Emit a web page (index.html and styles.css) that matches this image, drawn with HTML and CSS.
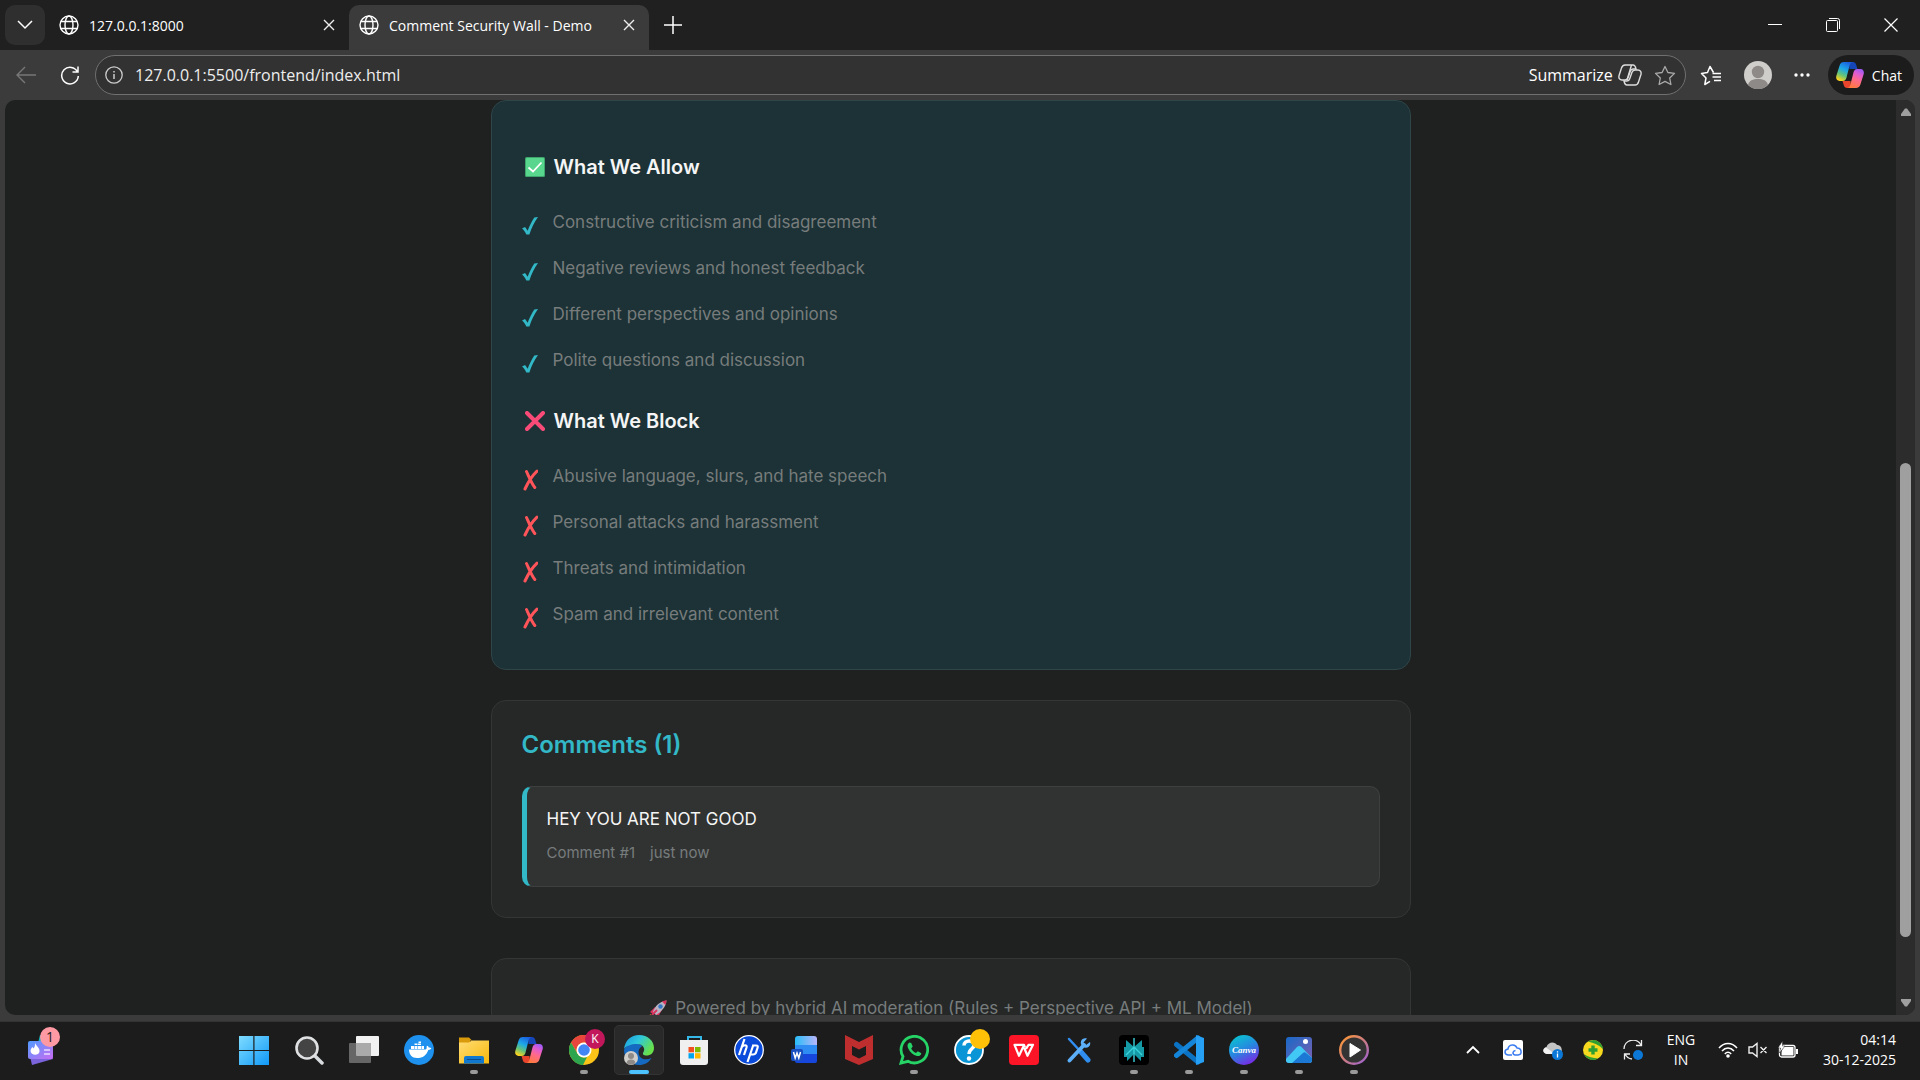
FILE: index.html
```html
<!DOCTYPE html>
<html lang="en">

<head>
    <meta charset="UTF-8">
    <meta name="viewport" content="width=device-width, initial-scale=1.0">
    <title>Comment Security Wall - Demo</title>
    <link rel="stylesheet" href="styles.css">
</head>

<body>
    <!-- Shared icons -->
    <svg class="sprite" width="0" height="0" aria-hidden="true">
        <defs>
            <linearGradient id="cop-a" x1="0.7" y1="0" x2="0.3" y2="1">
                <stop offset="0" stop-color="#1b5fe0" />
                <stop offset="0.4" stop-color="#1ca8e8" />
                <stop offset="0.7" stop-color="#63c47a" />
                <stop offset="1" stop-color="#ffd21c" />
            </linearGradient>
            <linearGradient id="cop-b" x1="0.7" y1="0" x2="0.3" y2="1">
                <stop offset="0" stop-color="#ff7a3d" />
                <stop offset="0.45" stop-color="#ff6a8a" />
                <stop offset="0.75" stop-color="#e05cd0" />
                <stop offset="1" stop-color="#a05cf5" />
            </linearGradient>
        </defs>
        <symbol id="copilot" viewBox="0 0 28 26">
            <path fill="#1546b8" d="M13 0h4c1.600 0 2.700 1 3.100 2.400L21.500 7h-8z" />
            <path fill="url(#cop-a)" d="M8 0h8.500c-1.800.5-2.500 2-3 3.800L10.400 16c-.7 2-1.800 3-3.400 3H3.500C.8 19-.3 16.600.3 14L3.600 3.400C4.300 1.200 5.700 0 8 0z" />
            <path fill="#e8452c" d="M15 26h-4c-1.600 0-2.700-1-3.100-2.400L6.500 19h8z" />
            <path fill="url(#cop-b)" transform="rotate(180 14 13)" d="M8 0h8.500c-1.800.5-2.500 2-3 3.800L10.400 16c-.7 2-1.800 3-3.400 3H3.500C.8 19-.3 16.600.3 14L3.600 3.400C4.300 1.200 5.700 0 8 0z" />
        </symbol>
        <symbol id="globe" viewBox="0 0 20 20">
            <g fill="none" stroke="#fff" stroke-width="1.400">
                <circle cx="10" cy="10" r="9" />
                <ellipse cx="10" cy="10" rx="4" ry="9" />
                <path d="M2 6.500h16M2 13.500h16" />
            </g>
        </symbol>
        <symbol id="x" viewBox="0 0 12 12">
            <path d="M1 1l10 10M11 1L1 11" fill="none" stroke="#eee" stroke-width="1.400" />
        </symbol>
        <symbol id="tick" viewBox="0 0 16 18">
            <path fill="#32b8c6" d="M0 11.500l3-1.500c1 1.200 1.700 2.200 2.600 3.700C7.700 8.500 9.600 4.500 12.300.5L16 0c-4 5.500-6.500 11-8.600 17.500H4.300C3.300 15 2 13 0 11.500z" />
        </symbol>
        <symbol id="cross" viewBox="0 0 16 22">
            <path fill="none" stroke="#ff5459" stroke-width="3" stroke-linecap="round" d="M4.500 2.500C7 8 9.500 14.500 12.800 18.500M15 2.200C10 7 6 13.500 3 20" />
        </symbol>
    </svg>

    <header class="tab-strip">
        <button class="tab-menu" aria-label="Tab actions">
            <svg width="16" height="10" viewBox="0 0 16 10"><path d="M1 1l7 7 7-7" fill="none" stroke="#fff" stroke-width="1.500" /></svg>
        </button>
        <div class="tab">
            <svg width="20" height="20"><use href="#globe" /></svg>
            <span class="tab-title">127.0.0.1:8000</span>
            <button class="tab-close" aria-label="Close tab"><svg width="12" height="12"><use href="#x" /></svg></button>
        </div>
        <div class="tab active">
            <svg width="20" height="20"><use href="#globe" /></svg>
            <span class="tab-title">Comment Security Wall - Demo</span>
            <button class="tab-close" aria-label="Close tab"><svg width="12" height="12"><use href="#x" /></svg></button>
        </div>
        <button class="new-tab" aria-label="New tab">
            <svg width="18" height="18" viewBox="0 0 18 18"><path d="M9 0v18M0 9h18" stroke="#fff" stroke-width="1.500" /></svg>
        </button>
        <div class="window-buttons">
            <button aria-label="Minimize"><svg width="14" height="14" viewBox="0 0 14 14"><path d="M0 6.500h14" stroke="#fff" /></svg></button>
            <button aria-label="Restore"><svg width="14" height="14" viewBox="0 0 14 14"><g fill="none" stroke="#fff"><rect x="0.500" y="2.500" width="11" height="11" rx="1" /><path d="M3 .5h8.500a2 2 0 0 1 2 2V11" /></g></svg></button>
            <button aria-label="Close window"><svg width="14" height="14" viewBox="0 0 14 14"><path d="M.5.5l13 13M13.500.5l-13 13" stroke="#fff" stroke-width="1.200" /></svg></button>
        </div>
    </header>

    <nav class="toolbar">
        <button class="nav-btn" aria-label="Back">
            <svg width="20" height="18" viewBox="0 0 20 18"><path d="M20 9H1.500M9 1L1 9l8 8" fill="none" stroke="#777" stroke-width="1.400" /></svg>
        </button>
        <button class="nav-btn" aria-label="Reload">
            <svg width="20" height="20" viewBox="0 0 20 20"><path d="M17.500 7A8.300 8.300 0 1 0 18.300 11M18 1.500V7h-5.500" fill="none" stroke="#fff" stroke-width="1.500" /></svg>
        </button>
        <div class="address-bar">
            <svg width="18" height="18" viewBox="0 0 18 18"><circle cx="9" cy="9" r="8.200" fill="none" stroke="#ccc" stroke-width="1.300" /><path d="M9 8v5M9 5v1.500" stroke="#ccc" stroke-width="1.500" /></svg>
            <input class="url" type="text" value="127.0.0.1:5500/frontend/index.html" aria-label="Address">
            <button class="summarize">Summarize
                <svg width="24" height="22" viewBox="0 0 24 22"><g fill="none" stroke="#ddd" stroke-width="1.400"><path d="M7 1h8c2 0 2.500 1.500 3 4h-3c-1.500 0-2.300 1-2.700 2.300l-2.300 6.500c-.5 1.400-1.400 2.200-3 2.200H4c-2.500 0-3.500-2-3-4.200l2.400-7.500C4 2.200 5 1 7 1z" /><path d="M17 21H9c-2 0-2.500-1.500-3-4h3c1.500 0 2.300-1 2.700-2.300L14 8.200C14.500 6.800 15.400 6 17 6h3c2.500 0 3.500 2 3 4.200l-2.400 7.500C20 19.800 19 21 17 21zM13.500 1L9 16" /></g></svg>
            </button>
            <button class="star" aria-label="Add to favorites">
                <svg width="22" height="21" viewBox="0 0 22 21"><path d="M11 1.500l2.900 6 6.600.9-4.800 4.600 1.200 6.500L11 16.400l-5.900 3.100 1.200-6.500L1.500 8.400l6.600-.9z" fill="none" stroke="#aaa" stroke-width="1.300" stroke-linejoin="round" /></svg>
            </button>
        </div>
        <button class="tool-btn" aria-label="Favorites">
            <svg width="22" height="21" viewBox="0 0 22 21"><path d="M13.500 7.500L10 1.500l-2.500 6-6 .9 4.500 4.600-1.200 6.500 5.200-3.100M12.500 8.500H21M12.500 12H21M14 15.500h7" fill="none" stroke="#fff" stroke-width="1.500" stroke-linejoin="round" /></svg>
        </button>
        <button class="tool-btn" aria-label="Profile">
            <svg width="28" height="28" viewBox="0 0 28 28"><circle cx="14" cy="14" r="14" fill="#d0cecb" /><circle cx="14" cy="11" r="6.200" fill="#8e8a87" /><path d="M4 24c1-4.500 5-6 10-6s9 1.500 10 6a14 14 0 0 1-20 0z" fill="#8e8a87" /></svg>
        </button>
        <button class="tool-btn" aria-label="Settings and more">
            <svg width="16" height="4" viewBox="0 0 16 4"><g fill="#fff"><circle cx="2" cy="2" r="1.700" /><circle cx="8" cy="2" r="1.700" /><circle cx="14" cy="2" r="1.700" /></g></svg>
        </button>
        <button class="chat-btn"><svg width="28" height="26"><use href="#copilot" /></svg>Chat</button>
    </nav>

    <div class="window-frame">
        <div class="viewport">
            <main class="page">
                <div class="container">
                    <section class="guidelines">
                        <h3>
                            <svg width="20" height="20" viewBox="0 0 20 20"><rect width="20" height="20" rx="1.500" fill="#3fa56c" /><rect x="1" y="1" width="18" height="18" rx="1" fill="#58d68d" /><path d="M3.500 10.500l4.500 4 8.500-9" fill="none" stroke="#fff" stroke-width="1.800" /></svg>
                            What We Allow
                        </h3>
                        <ul>
                            <li><svg width="16" height="18"><use href="#tick" /></svg>Constructive criticism and disagreement</li>
                            <li><svg width="16" height="18"><use href="#tick" /></svg>Negative reviews and honest feedback</li>
                            <li><svg width="16" height="18"><use href="#tick" /></svg>Different perspectives and opinions</li>
                            <li><svg width="16" height="18"><use href="#tick" /></svg>Polite questions and discussion</li>
                        </ul>
                        <h3>
                            <svg width="20" height="20" viewBox="0 0 20 20"><path d="M2 2l16 16M18 2L2 18" stroke="#fa4b78" stroke-width="4" stroke-linecap="round" /></svg>
                            What We Block
                        </h3>
                        <ul>
                            <li><svg width="16" height="22"><use href="#cross" /></svg>Abusive language, slurs, and hate speech</li>
                            <li><svg width="16" height="22"><use href="#cross" /></svg>Personal attacks and harassment</li>
                            <li><svg width="16" height="22"><use href="#cross" /></svg>Threats and intimidation</li>
                            <li><svg width="16" height="22"><use href="#cross" /></svg>Spam and irrelevant content</li>
                        </ul>
                    </section>

                    <section class="comments">
                        <h2>Comments (1)</h2>
                        <article class="comment">
                            <p class="comment-text">HEY YOU ARE NOT GOOD</p>
                            <p class="comment-meta"><span>Comment #1</span><span>just now</span></p>
                        </article>
                    </section>

                    <footer class="page-footer">
                        <svg width="20" height="20" viewBox="0 0 20 20"><path d="M2 13l5-5 2 1-4 6zM7 17l4-1 3-5-5 2z" fill="#d9345f" /><path d="M1 19l1-4 4 3z" fill="#e8912c" /><path d="M5 13C7 7 11 3 18.500 1.500 18 8 13 13 8 16z" fill="#b9b4c3" /><path d="M14 2.500c1.500-.6 3-1 4.500-1.200 0 1.700-.5 3.300-1.200 4.800z" fill="#d9345f" /><circle cx="12.500" cy="7.500" r="2.200" fill="#3478c8" /><path d="M4 16l5-5" stroke="#d9345f" stroke-width="2" /></svg>
                        <span>Powered by hybrid AI moderation (Rules + Perspective API + ML Model)</span>
                    </footer>
                </div>
            </main>
            <div class="scrollbar">
                <svg width="10" height="8" viewBox="0 0 10 8"><path d="M4 .5h2L10 6v2H0V6z" fill="#9f9f9f" /></svg>
                <div class="track"><div class="thumb"></div></div>
                <svg width="10" height="8" viewBox="0 0 10 8"><path d="M0 0h10v2L6 7.500H4L0 2z" fill="#9f9f9f" /></svg>
            </div>
        </div>
    </div>

    <div class="taskbar">
        <button class="widgets" aria-label="Widgets">
            <svg width="28" height="30" viewBox="0 0 28 30"><path d="M2 13l20-4 5 15-21 6z" fill="#7b63dc" /><path d="M14 0h8v8h-10z" fill="#14b4bd" /><defs><linearGradient id="wg" x1="0" y1="0" x2="1" y2="1"><stop offset="0" stop-color="#4f9bff" /><stop offset="1" stop-color="#c96cf2" /></linearGradient></defs><rect x="2" y="6" width="25" height="18" rx="2" fill="url(#wg)" /><path d="M9 8c1 3 5 5 4.500 8.500C13 21 5 21 4.500 16c0-2 1-3 2-4l1 1.500C9 12 9 10 9 8z" fill="#fff" /><path d="M18 15h6M18 19h6" stroke="#eadcff" stroke-width="1.500" /></svg>
            <span class="widget-badge">1</span>
        </button>

        <div class="apps">
            <button class="app" aria-label="Start">
                <svg width="30" height="30" viewBox="0 0 30 30"><defs><linearGradient id="win" x1="0" y1="0" x2="1" y2="1" gradientUnits="objectBoundingBox"><stop offset="0" stop-color="#7fdcff" /><stop offset="1" stop-color="#1098f7" /></linearGradient></defs><path fill="url(#win)" d="M0 1h14.300v14H0zM15.500 1H30v14H15.500zM0 16h14.300v14H0zM15.500 16H30v14H15.500z" /></svg>
            </button>
            <button class="app" aria-label="Search">
                <svg width="30" height="30" viewBox="0 0 30 30"><path d="M20 20l8 8" stroke="#d9dcdf" stroke-width="3.500" stroke-linecap="round" /><circle cx="13" cy="13" r="10.500" fill="#444" stroke="#dfe1e3" stroke-width="2.600" /></svg>
            </button>
            <button class="app" aria-label="Task view">
                <svg width="30" height="30" viewBox="0 0 30 30"><rect x="7" y="1" width="23" height="20" rx="1" fill="#f2f2f2" /><rect x="0" y="8" width="22" height="20" rx="1" fill="#666" /><path d="M7 8h15v13H8a1 1 0 0 1-1-1z" fill="#aaa" /></svg>
            </button>
            <button class="app" aria-label="Docker">
                <svg width="30" height="30" viewBox="0 0 30 30"><circle cx="15" cy="15" r="15" fill="#1d91ed" /><path d="M5 14.500h16.500c1-.2 1.500-1.500 1-3l1-.8c.9.700 1.200 1.300 1.400 2 .9-.2 1.700 0 2.400.5-.5 1.200-1.600 1.700-3 1.700C22.500 20 19 23 13 23c-5 0-7.800-3-8-8.500zM7 11h3v3H7zM10.500 11h3v3h-3zM14 11h3v3h-3zM17.500 11h2.500v3h-2.500zM10.500 8.500h3V10h-3zM14 8.500h3V10h-3zM14.500 6.500H17V8h-2.500z" fill="#fff" /></svg>
            </button>
            <button class="app running" aria-label="File Explorer">
                <svg width="30" height="30" viewBox="0 0 30 30"><defs><linearGradient id="fold" x1="0" y1="0" x2="1" y2="1"><stop offset="0" stop-color="#ffdc73" /><stop offset="1" stop-color="#f7b80c" /></linearGradient></defs><path d="M0 2.500h10l3 3h-2v4H0z" fill="#d99a0c" /><path d="M0 7.500h10l2.500-2H30v23H0z" fill="url(#fold)" /><path d="M5 28.500V23a2 2 0 0 1 2-2h16a2 2 0 0 1 2 2v5.500z" fill="#1178d0" /><path d="M8 24.500h14" stroke="#0a4c8c" /></svg>
            </button>
            <button class="app" aria-label="Copilot"><svg width="28" height="26"><use href="#copilot" /></svg></button>
            <button class="app running" aria-label="Google Chrome">
                <svg width="30" height="30" viewBox="0 0 30 30"><circle cx="15" cy="15" r="15" fill="#fcc419" /><path d="M2 7.500A15 15 0 0 1 28 7.500H15a7.500 7.500 0 0 0-6.500 11z" fill="#e8453c" /><path d="M2 7.500l6.500 11.250A7.500 7.500 0 0 0 18 21.900L14 30A15 15 0 0 1 2 7.500z" fill="#2da44e" /><circle cx="15" cy="15" r="7.500" fill="#fff" /><circle cx="15" cy="15" r="5.800" fill="#4285f4" /></svg>
                <span class="chrome-badge">K</span>
            </button>
            <button class="app running current" aria-label="Microsoft Edge">
                <svg width="30" height="30" viewBox="0 0 30 30"><defs><linearGradient id="ed" x1="0" y1="0" x2="1" y2="0.500"><stop offset="0" stop-color="#1996dd" /><stop offset="0.500" stop-color="#2fc8dc" /><stop offset="1" stop-color="#67e04c" /></linearGradient></defs><path d="M0 15c0 8.500 6.500 15 15 15 5.500 0 10-2.500 12.500-7-6 3-13 1-13-6 0-3 2-5 4-6C12 6 3 8 0 15z" fill="#1569c0" /><path d="M0 14C1 5.500 7 0 15 0c9 0 15 6 15 13 0 5-3.500 7.500-7.500 7.500-3 0-4.500-1.500-3-3.500 2-3 0-8-6.500-8C7 9 2 11 0 14z" fill="url(#ed)" /><circle cx="7" cy="23" r="7" fill="#d0cecb" /><circle cx="7" cy="21" r="3" fill="#8e8a87" /><path d="M2.500 28c.5-2.500 2-3.500 4.500-3.500s4 1 4.500 3.500a7 7 0 0 1-9 0z" fill="#8e8a87" /></svg>
            </button>
            <button class="app" aria-label="Microsoft Store">
                <svg width="30" height="30" viewBox="0 0 30 30"><path d="M9 6V2h13v4" fill="none" stroke="#35b8e8" stroke-width="2" /><path d="M1 5h28v22a3 3 0 0 1-3 3H4a3 3 0 0 1-3-3z" fill="#f0f0f0" /><path d="M9.500 12H15v5.300H9.500z" fill="#f25022" /><path d="M16 12h5.500v5.300H16z" fill="#7fba00" /><path d="M9.500 18.200H15v5.300H9.500z" fill="#00a4ef" /><path d="M16 18.200h5.500v5.300H16z" fill="#ffb900" /></svg>
            </button>
            <button class="app" aria-label="HP">
                <svg width="30" height="30" viewBox="0 0 30 30"><circle cx="15" cy="15" r="14.300" fill="#0a4bdc" stroke="#fff" stroke-width="1.300" /><path d="M10.500 4L5 20M7.500 12.500c1.500-2.500 6-3.500 5 0L10 20M19.500 9.500L13.500 27M19 10.500h3c2 0 2 1 1.500 2.500l-1.500 4.500c-.6 1.800-1.500 2-3 2h-3" fill="none" stroke="#fff" stroke-width="2.200" /></svg>
            </button>
            <button class="app" aria-label="Word">
                <svg width="28" height="28" viewBox="0 0 28 28"><defs><linearGradient id="wd" x1="0" y1="0" x2="1" y2="0"><stop offset="0" stop-color="#27bdf8" /><stop offset="1" stop-color="#b9b5fa" /></linearGradient></defs><rect x="5" y="0" width="22" height="14" rx="3" fill="url(#wd)" /><path d="M5 9h22v9H5z" fill="#2e8cf2" /><path d="M5 18h22v7a2 2 0 0 1-2 2H7a2 2 0 0 1-2-2z" fill="#1646dc" /><rect x="1" y="13" width="12" height="12" rx="2" fill="#1a4fc2" /><path d="M3.500 16l1.700 6 1.800-5 1.800 5 1.700-6" fill="none" stroke="#fff" stroke-width="1.500" /></svg>
            </button>
            <button class="app" aria-label="McAfee">
                <svg width="28" height="30" viewBox="0 0 28 30"><path d="M0 0l14 7L28 0v24l-14 6-14-6zM7 11v9l7 3.500 7-3.500v-9l-7 3.500z" fill="#bf2e2e" fill-rule="evenodd" /></svg>
            </button>
            <button class="app running" aria-label="WhatsApp">
                <svg width="30" height="30" viewBox="0 0 30 30"><path d="M2 28l2-6.500A13.300 13.300 0 1 1 9 26.300z" fill="none" stroke="#25d366" stroke-width="2.800" /><path d="M10.500 7.500c-2 1-2.500 3-1.500 5.500 2 4.500 5 7 9 8 2.500.5 4-.8 4.300-2.800l-3.500-2-1.800 1.800c-2-.8-3.700-2.500-4.800-4.500l1.500-2-1.500-3.500z" fill="#25d366" /></svg>
            </button>
            <button class="app" aria-label="Help">
                <svg width="30" height="30" viewBox="0 0 30 30"><circle cx="15" cy="15" r="14" fill="#0a96d6" stroke="#fff" stroke-width="1.800" /><path d="M10 10.500c0-6 10-6 10-.5 0 4-5 3.500-5 9" fill="none" stroke="#fff" stroke-width="3.400" /><circle cx="15" cy="23.500" r="2.200" fill="#fff" /></svg>
                <span class="help-badge"></span>
            </button>
            <button class="app" aria-label="WPS Office">
                <svg width="30" height="30" viewBox="0 0 30 30"><rect width="30" height="30" rx="4" fill="#fc1526" /><path d="M10.500 9.800H5.500l4.500 11 4.500-9.500 4 9.500 5.500-11h-4.500l-2.500 4M10 9.800h5l1 2.500" fill="none" stroke="#fff" stroke-width="2.200" stroke-linejoin="round" /></svg>
            </button>
            <button class="app" aria-label="Tools">
                <svg width="24" height="26" viewBox="0 0 24 26"><path d="M2 2l12 13" stroke="#2f8ef0" stroke-width="2.500" stroke-linecap="round" /><path d="M14 15l7 8" stroke="#2f8ef0" stroke-width="5" stroke-linecap="round" /><path d="M2.500 23.500L17 8" stroke="#5cb0fa" stroke-width="3.800" stroke-linecap="round" /><path d="M20 1.500c-4-1.500-7 2-6 5.500s5 5 8 2.500c1.300-1.200 1.500-3 1-4.500l-4 3-2.500-2.500z" fill="#5cb0fa" /></svg>
            </button>
            <button class="app running" aria-label="Perplexity">
                <svg width="30" height="30" viewBox="0 0 30 30"><rect width="30" height="30" rx="4" fill="#000" /><path d="M15 3v24M7 5l8 7 8-7v7h2v10h-3v4l-7-7-7 7v-4H5V12h2z" fill="#159aa5" /><path d="M15 3v24M15 12L7 20M15 12l8 8" fill="none" stroke="#39d2dc" stroke-width="1.400" /></svg>
            </button>
            <button class="app running" aria-label="Visual Studio Code">
                <svg width="30" height="30" viewBox="0 0 30 30"><path d="M2.500 9.500L24 27" stroke="#0b72c4" stroke-width="5" stroke-linecap="round" /><path d="M2.500 20.500L24 3" stroke="#1485d8" stroke-width="5" stroke-linecap="round" /><path d="M22 0l8 3v24l-8 3z" fill="#25a0f4" /></svg>
            </button>
            <button class="app running" aria-label="Canva">
                <svg width="30" height="30" viewBox="0 0 30 30"><defs><linearGradient id="cv" x1="0.200" y1="0" x2="0.700" y2="1"><stop offset="0" stop-color="#08c5cf" /><stop offset="0.500" stop-color="#2787e0" /><stop offset="1" stop-color="#7c25e6" /></linearGradient></defs><circle cx="15" cy="15" r="15" fill="url(#cv)" /></svg>
                <span class="canva-name">Canva</span>
            </button>
            <button class="app running" aria-label="Photos">
                <svg width="26" height="26" viewBox="0 0 26 26"><defs><linearGradient id="ph" x1="0" y1="0" x2="1" y2="1"><stop offset="0" stop-color="#1769c8" /><stop offset="1" stop-color="#7f5fb0" /></linearGradient></defs><rect width="26" height="26" rx="3" fill="url(#ph)" /><path d="M0 22l11-12c1.500-1.500 3-1.500 4.500 0L26 21v2a3 3 0 0 1-3 3H3a3 3 0 0 1-3-3z" fill="#41c8f4" /><path d="M6 26l11-10c1-1 2-1 3 0l6 5v2a3 3 0 0 1-3 3z" fill="#1b78d4" /><circle cx="19.500" cy="4.500" r="2.500" fill="#fff" /></svg>
            </button>
            <button class="app running" aria-label="Media Player">
                <svg width="30" height="30" viewBox="0 0 30 30"><defs><linearGradient id="mp" x1="0" y1="0" x2="1" y2="1"><stop offset="0" stop-color="#ff9a2e" /><stop offset="1" stop-color="#9a5fd6" /></linearGradient></defs><circle cx="15" cy="15" r="13.800" fill="#333" stroke="url(#mp)" stroke-width="2.400" /><path d="M11 8.500v13.500L21.500 15z" fill="#fff" stroke="#fff" stroke-linejoin="round" /></svg>
            </button>
        </div>

        <div class="tray">
            <button class="tray-btn" aria-label="Show hidden icons"><svg width="14" height="10" viewBox="0 0 14 10"><path d="M1 8l6-6 6 6" fill="none" stroke="#fff" stroke-width="1.800" /></svg></button>
            <button class="tray-btn" aria-label="Cloud drive"><svg width="20" height="20" viewBox="0 0 20 20"><rect width="20" height="20" rx="2" fill="#fff" /><path d="M9 15H5c-4-.5-4-5.500 0-6 .5-5 7.500-5.500 9-1 5 0 5.500 6.500 1 7h-3c-3-1-2.500-4 .5-4.500" fill="none" stroke="#3b7cf0" stroke-width="1.500" /></svg></button>
            <button class="tray-btn" aria-label="OneDrive"><svg width="20" height="20" viewBox="0 0 20 20"><path d="M4 14c-5-.5-5-6-.5-7C5 1.500 12 1 14 5c4 0 6 4 4 9z" fill="#c4c4c4" /><path d="M4 14c-4-.5-5-5-1-6.500L12 14z" fill="#f2f2f2" /><circle cx="14.500" cy="14.500" r="5.500" fill="#0b78d8" /><path d="M14.500 13.500v4M14.500 11.200v1.300" stroke="#fff" stroke-width="1.300" /></svg></button>
            <button class="tray-btn" aria-label="Antivirus"><svg width="20" height="20" viewBox="0 0 20 20"><circle cx="10" cy="10" r="10" fill="#f6d81f" /><path d="M5 1.500A10 10 0 0 1 20 9C16 5 11 3 5 1.500zM1 14a10 10 0 0 0 14 4.600C10 18 5 17 1 14z" fill="#2f9e32" /><path d="M10 5.500v9M5.500 10h9" stroke="#2f9e32" stroke-width="3.400" /></svg></button>
            <button class="tray-btn" aria-label="Updates"><svg width="20" height="20" viewBox="0 0 20 20"><path d="M1 9a9 9 0 0 1 17-4M18.500 0v5.500H13M9 19A9 9 0 0 1 2 14M1.500 19.500V14H7" fill="none" stroke="#eee" stroke-width="1.300" /><circle cx="15" cy="15" r="5" fill="#0b78d8" /></svg></button>
            <button class="language">ENG<br>IN</button>
            <button class="status" aria-label="Network, sound and battery">
                <svg width="20" height="16" viewBox="0 0 20 16"><path d="M1 6c5-6 13-6 18 0M4 9c3.500-4 8.500-4 12 0M6.800 12c2-2.200 4.400-2.200 6.400 0" fill="none" stroke="#fff" stroke-width="1.500" /><circle cx="10" cy="14" r="1.800" fill="#fff" /></svg>
                <svg width="20" height="16" viewBox="0 0 20 16"><path d="M1 5h3.500L9 1.500v13L4.500 11H1zM12.500 5l6 6M18.500 5l-6 6" fill="none" stroke="#eee" stroke-width="1.400" /></svg>
                <svg width="20" height="18" viewBox="0 0 20 18"><rect x="1.500" y="4.500" width="15.500" height="11.500" rx="2" fill="none" stroke="#fff" stroke-width="1.300" /><path d="M5 6h10.500v8.500H3.500V11zM18 8h2v5h-2z" fill="#fff" /><path d="M4.500 0L0 7h2.500L1.500 12 7 5H4.500z" fill="#fff" stroke="#1c1c1c" stroke-width="0.500" /></svg>
            </button>
            <button class="clock">04:14<br>30-12-2025</button>
        </div>
    </div>
</body>

</html>
```
FILE: styles.css
```css
* {
    margin: 0;
    padding: 0;
    box-sizing: border-box;
}

body {
    display: flex;
    flex-direction: column;
    height: 100vh;
    overflow: hidden;
    background-color: #3b3b3b;
    color: #fff;
    font-family: "Open Sans", "Noto Sans", sans-serif;
    font-size: 14px;
}

button {
    display: flex;
    align-items: center;
    justify-content: center;
    border: none;
    background: none;
    color: inherit;
    font: inherit;
    cursor: pointer;
}

svg {
    flex-shrink: 0;
}

.sprite {
    position: absolute;
}

/* Tab strip */
.tab-strip {
    display: flex;
    height: 50px;
    padding: 5px 0 0 5px;
    background-color: #202020;
}

.tab-menu {
    width: 40px;
    height: 40px;
    margin-right: 4px;
    border-radius: 10px;
    background-color: #2f2f2f;
}

.tab {
    display: flex;
    align-items: center;
    width: 300px;
    height: 45px;
    padding: 0 14px 5px 10px;
    gap: 10px;
}

.tab.active {
    border-radius: 10px 10px 0 0;
    background-color: #3b3b3b;
}

.tab-title {
    flex: 1;
    white-space: nowrap;
}

.tab-close {
    width: 12px;
    height: 20px;
}

.new-tab {
    width: 48px;
    height: 40px;
}

.window-buttons {
    display: flex;
    margin-left: auto;
}

.window-buttons button {
    width: 58px;
    height: 40px;
}

/* Address row */
.toolbar {
    display: flex;
    align-items: center;
    height: 50px;
    padding: 0 6px 0 4px;
}

.nav-btn {
    width: 44px;
    height: 40px;
}

.address-bar {
    display: flex;
    flex: 1;
    align-items: center;
    height: 40px;
    margin-left: 3px;
    padding: 0 9px;
    gap: 12px;
    border: 1px solid #707070;
    border-radius: 20px;
    background-color: #323232;
}

.url {
    flex: 1;
    min-width: 0;
    border: none;
    outline: none;
    background: none;
    color: #ededed;
    font: inherit;
    font-size: 16px;
}

.summarize {
    gap: 5px;
    font-size: 16px;
}

.tool-btn {
    width: 50px;
    height: 40px;
}

.tool-btn + .tool-btn {
    width: 44px;
}

.chat-btn {
    height: 40px;
    margin-left: 4px;
    padding: 0 12px 0 8px;
    gap: 8px;
    border-radius: 20px;
    background-color: #1c1c1c;
}

/* Page area */
.window-frame {
    display: flex;
    flex: 1;
    min-height: 0;
    padding: 0 5px 6px;
}

.viewport {
    display: flex;
    flex: 1;
    overflow: hidden;
    border-radius: 10px;
    background-color: #1f2121;
}

.page {
    flex: 1;
    color: #777c7c;
    font-family: Inter, "Liberation Sans", Arial, sans-serif;
    font-size: 17px;
}

.container {
    max-width: 920px;
    margin: 0 auto;
}

.guidelines {
    padding: 51px 30px 32px;
    border: 1px solid #2f4548;
    border-radius: 15px;
    background-color: #1c3236;
}

.guidelines h3 {
    display: flex;
    align-items: center;
    margin-bottom: 17px;
    padding-left: 3px;
    gap: 9px;
    color: #f5f5f5;
    font-size: 20px;
    font-weight: 600;
    line-height: 30px;
}

.guidelines ul {
    list-style: none;
}

.guidelines ul + h3 {
    margin-top: 23px;
}

.guidelines li {
    display: flex;
    align-items: center;
    height: 46px;
    gap: 15px;
}

.guidelines li svg {
    margin-top: 8px;
}

.comments {
    margin-top: 30px;
    padding: 29px 30px 30px;
    border: 1px solid #343636;
    border-radius: 15px;
    background-color: #262828;
}

.comments h2 {
    margin-bottom: 26px;
    color: #32b8c6;
    font-size: 24px;
    font-weight: 600;
    line-height: 30px;
}

.comment {
    padding: 20px;
    border: 1px solid #3e4040;
    border-left: 5px solid #32b8c6;
    border-radius: 10px;
    background-color: #313333;
}

.comment-text {
    margin-bottom: 8px;
    color: #f5f5f5;
    line-height: 24px;
}

.comment-meta {
    display: flex;
    gap: 15px;
    font-size: 15px;
    line-height: 27px;
}

.page-footer {
    display: flex;
    align-items: center;
    justify-content: center;
    margin-top: 40px;
    padding: 36px 30px;
    gap: 7px;
    border: 1px solid #343636;
    border-radius: 15px;
    background-color: #262828;
    line-height: 27px;
    white-space: nowrap;
}

.scrollbar {
    display: flex;
    flex-direction: column;
    align-items: center;
    width: 19px;
    padding: 8px 0;
    background-color: #2c2c2c;
}

.track {
    display: flex;
    flex: 1;
    flex-direction: column;
    margin: 6px 0;
}

.track::before {
    content: "";
    flex: 341;
}

.track::after {
    content: "";
    flex: 56;
}

.thumb {
    flex: 474;
    width: 11px;
    border-radius: 6px;
    background-color: #9f9f9f;
}

/* Taskbar */
.taskbar {
    display: flex;
    align-items: center;
    height: 59px;
    padding-bottom: 2px;
    border-top: 1px solid #333;
    background-color: #1c1c1c;
}

.widgets {
    position: relative;
    width: 80px;
    height: 50px;
}

.widget-badge {
    position: absolute;
    top: 2px;
    left: 40px;
    width: 20px;
    border-radius: 10px;
    background-color: #ff99a4;
    color: #1c1c1c;
    line-height: 20px;
}

.apps {
    display: flex;
    margin-left: 149px;
    gap: 5px;
}

.app {
    position: relative;
    width: 50px;
    height: 50px;
    border: 1px solid transparent;
    border-radius: 5px;
}

.running::after {
    content: "";
    position: absolute;
    bottom: 0;
    width: 8px;
    height: 4px;
    border-radius: 2px;
    background-color: #9a9a9a;
}

.app.current {
    border-color: #333;
    background-color: #292929;
}

.current::after {
    width: 20px;
    background-color: #4cc2ff;
}

.chrome-badge,
.help-badge {
    position: absolute;
    top: 3px;
    right: 3px;
    width: 20px;
    height: 20px;
    border-radius: 10px;
    background-color: #c2185b;
    font-size: 12px;
    line-height: 20px;
}

.help-badge {
    background-color: #ffc107;
}

.canva-name {
    position: absolute;
    font-family: "Liberation Serif", serif;
    font-size: 9px;
    font-style: italic;
    font-weight: bold;
}

.tray {
    display: flex;
    align-items: center;
    height: 100%;
    margin-left: auto;
    padding-right: 24px;
}

.tray-btn {
    width: 40px;
    height: 40px;
}

.language {
    width: 56px;
    line-height: 20px;
}

.status {
    width: 97px;
    gap: 10px;
}

.clock {
    width: 90px;
    justify-content: flex-end;
    line-height: 20px;
    text-align: right;
}
```
